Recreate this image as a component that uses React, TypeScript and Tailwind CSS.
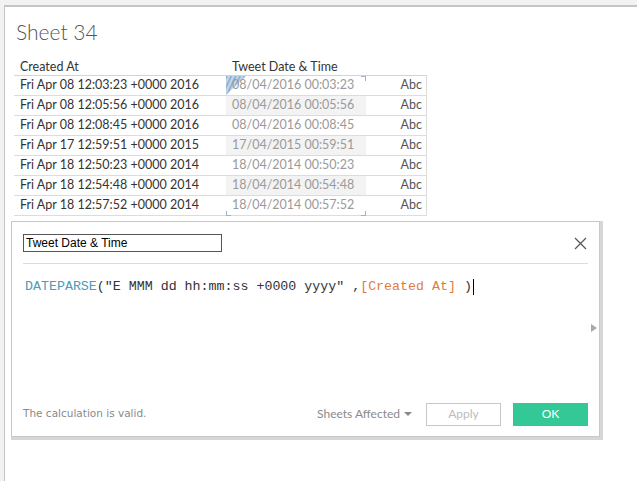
const rows = [
  ['Fri Apr 08 12:03:23 +0000 2016', '08/04/2016 00:03:23'],
  ['Fri Apr 08 12:05:56 +0000 2016', '08/04/2016 00:05:56'],
  ['Fri Apr 08 12:08:45 +0000 2016', '08/04/2016 00:08:45'],
  ['Fri Apr 17 12:59:51 +0000 2015', '17/04/2015 00:59:51'],
  ['Fri Apr 18 12:50:23 +0000 2014', '18/04/2014 00:50:23'],
  ['Fri Apr 18 12:54:48 +0000 2014', '18/04/2014 00:54:48'],
  ['Fri Apr 18 12:57:52 +0000 2014', '18/04/2014 00:57:52'],
];

const lato = { fontFamily: 'Lato, "Open Sans", sans-serif' };

function Corner({ className }: { className: string }) {
  return <span className={`absolute w-[5px] h-[5px] border-[#9fb3c8] ${className}`} />;
}

export default function App() {
  return (
    <div className="w-[637px] h-[481px] bg-[#f2f2f2] pl-[4px] pt-[5px] overflow-hidden">
      <div className="h-full bg-white border-l border-t-2 border-[#c4c4c4] pl-[6px]" style={lato}>
        <h1 className="ml-[5px] mt-[13px] text-[21px] leading-[24px] font-light text-[#555]">Sheet 34</h1>

        <div className="mt-[14px] ml-[3px] w-[413px] text-[12.5px]">
          <div className="grid grid-cols-[212px_140px_61px] h-[18px] items-center border-b border-[#d4d4d4] text-[#333]">
            <div className="pl-[6px]">Created At</div>
            <div className="pl-[6px]">Tweet Date &amp; Time</div>
            <div />
          </div>
          {rows.map(([a, b], i) => (
            <div
              key={a + i}
              className="grid grid-cols-[212px_140px_61px] h-[20px] items-center border-b border-[#dcdcdc] border-r"
            >
              <div className="pl-[6px] text-[#333]">{a}</div>
              <div
                className={`relative h-full flex items-center pl-[6px] text-[#9a9a9a] ${
                  i % 2 === 1 ? 'bg-[#f3f3f3]' : ''
                }`}
              >
                {i === 0 && (
                  <svg className="absolute left-0 top-0" width="20" height="19" viewBox="0 0 20 19">
                    <defs>
                      <pattern id="hatch" width="4" height="4" patternUnits="userSpaceOnUse" patternTransform="rotate(25)">
                        <rect width="4" height="4" fill="#c3d6e8" />
                        <rect width="1.5" height="4" fill="#86a9cb" />
                      </pattern>
                    </defs>
                    <polygon points="0,0 20,0 0,19" fill="url(#hatch)" />
                  </svg>
                )}
                {i === 0 && <Corner className="right-0 top-0 border-t border-r" />}
                {i === rows.length - 1 && <Corner className="left-0 bottom-[-1px] border-b border-l" />}
                {i === rows.length - 1 && <Corner className="right-0 bottom-[-1px] border-b border-r" />}
                <span className="relative">{b}</span>
              </div>
              <div className="text-right pr-[5px] text-[#555]">Abc</div>
            </div>
          ))}
        </div>

        <div className="mt-[5px] w-[592px] h-[219px] pr-[3px] pb-[3px] bg-[#d6d6d6]">
          <div className="w-[589px] h-[216px] border border-[#c8c8c8] bg-white px-[11px] pt-[12px] flex flex-col">
            <div className="flex items-center justify-between">
              <div
                className="w-[199px] h-[18px] border border-[#555] px-[2px] text-[12px] leading-[16px] text-black"
                style={{ fontFamily: '"Liberation Sans", Arial, sans-serif' }}
              >
                Tweet Date &amp; Time
              </div>
              <svg className="mr-[1px]" width="13" height="13" viewBox="0 0 13 13">
                <path d="M1 1 L12 12 M12 1 L1 12" stroke="#555" strokeWidth="1.2" />
              </svg>
            </div>
            <div className="mt-[11px] border-t border-[#dcdcdc]" />
            <div className="relative flex-1">
              <div
                className="mt-[15px] ml-[2px] text-[13.3px] leading-[16px] text-[#333] whitespace-pre flex items-center"
                style={{ fontFamily: '"Liberation Mono", "Courier New", monospace' }}
              >
                <span className="text-[#4e9cb8]">DATEPARSE</span>
                <span>("E MMM dd hh:mm:ss +0000 yyyy" ,</span>
                <span className="text-[#e07d3c]">[Created At]</span>
                <span> )</span>
                <span className="ml-[1px] w-[1px] h-[16px] bg-black" />
              </div>
              <span className="absolute right-[-9px] top-[60px] w-0 h-0 border-y-[4px] border-y-transparent border-l-[6px] border-l-[#a8a8a8]" />
            </div>
            <div className="flex items-center h-[22px] mb-[11px]">
              <span
                className="text-[#8a8a8a]"
                style={{ fontFamily: '"DejaVu Sans", Tahoma, sans-serif', fontSize: '10.5px' }}
              >
                The calculation is valid.
              </span>
              <span className="ml-auto text-[12px] text-[#8a8a8a] flex items-center gap-[4px]">
                Sheets Affected
                <span className="w-0 h-0 border-x-[4px] border-x-transparent border-t-[4px] border-t-[#8a8a8a]" />
              </span>
              <button className="ml-[14px] w-[75px] h-[23px] border border-[#c8c8c8] text-[12px] text-[#bbb] bg-white">
                Apply
              </button>
              <button className="ml-[12px] w-[75px] h-[23px] bg-[#33c896] text-[12px] text-white">OK</button>
            </div>
          </div>
        </div>
      </div>
    </div>
  );
}
